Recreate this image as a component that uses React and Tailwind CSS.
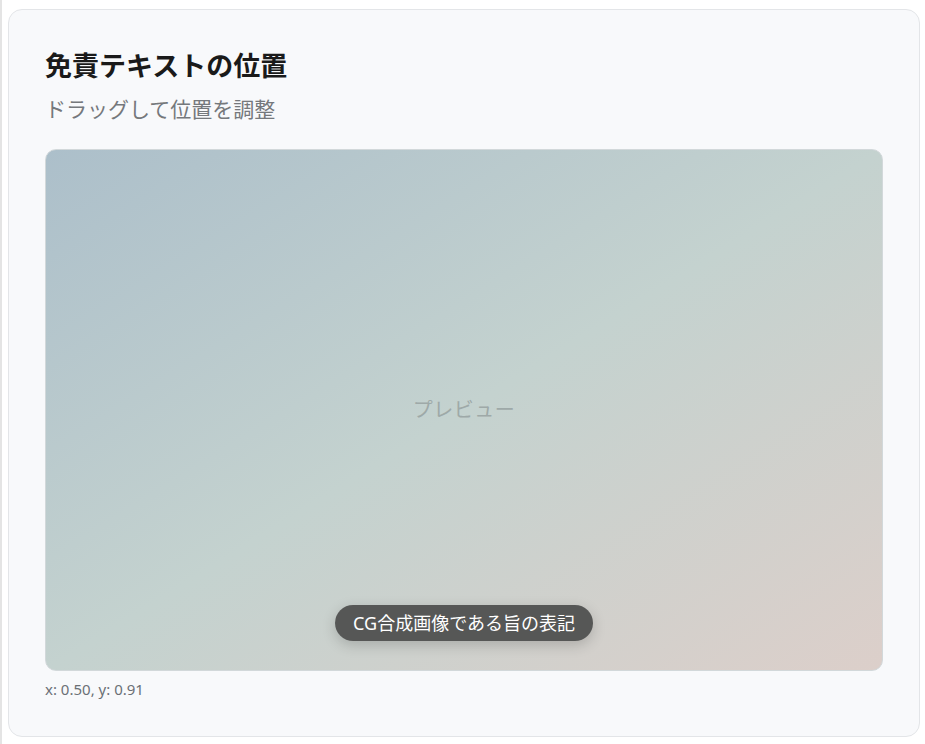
import { useState } from 'react'

const FONT = '"Noto Sans", "Noto Sans CJK JP", sans-serif'

export default function App() {
  const [pos] = useState({ x: 0.5, y: 0.91 })

  return (
    <div
      className="min-h-[744px] bg-white border-l-2 border-[#e4e4e4] pl-[6px] pr-[5px] pt-[9px] pb-[6px]"
      style={{ fontFamily: FONT }}
    >
      <div className="bg-[#f8f9fb] border border-[#e3e5e8] rounded-[14px] px-[36px] pt-[37px] pb-[37px]">
        <h2 className="text-[27px] leading-[38px] font-bold text-[#1a1a1a]">免責テキストの位置</h2>
        <p className="mt-[9px] text-[21px] leading-[30px] text-[#75787c]">ドラッグして位置を調整</p>

        <div className="relative mt-[25px] h-[522px] rounded-[11px] border border-[#d2d8da] overflow-hidden bg-gradient-to-br from-[#acbfca] via-[#c4d2cf] to-[#dccfca]">
          <div className="h-full flex items-center justify-center">
            <span className="text-[20px] text-[#9ea9a8] tracking-[0.5px]">プレビュー</span>
          </div>
          <div
            className="absolute -translate-x-1/2 -translate-y-1/2 whitespace-nowrap rounded-full bg-[#4f504f]/95 px-[18px] h-[36px] flex items-center text-[18px] text-white shadow-[0_4px_14px_rgba(0,0,0,0.18)]"
            style={{ left: `${pos.x * 100}%`, top: `${pos.y * 100}%` }}
          >
            CG合成画像である旨の表記
          </div>
        </div>

        <p className="mt-[8px] text-[15px] leading-[20px] text-[#6b7076]">
          x: {pos.x.toFixed(2)}, y: {pos.y.toFixed(2)}
        </p>
      </div>
    </div>
  )
}
